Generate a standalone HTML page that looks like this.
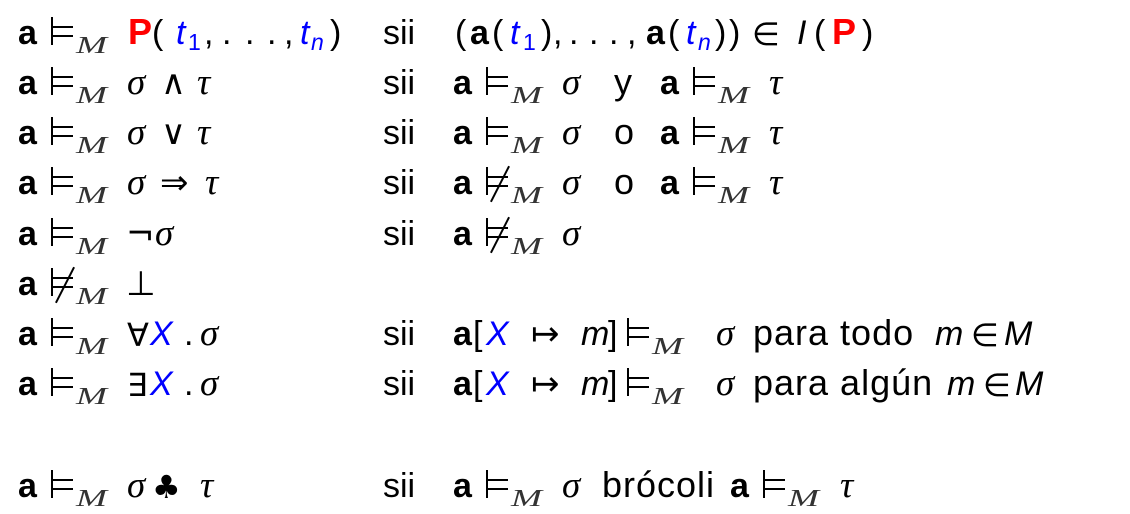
<!DOCTYPE html>
<html><head><meta charset="utf-8"><style>
body{margin:0;width:1130px;height:514px;background:#fff;position:relative;overflow:hidden;font-family:"Liberation Sans",sans-serif;color:#000}
.row{position:absolute;left:0;height:0;width:1130px}
.row span{position:absolute;line-height:1;white-space:nowrap;top:-0.85em}
.A{font-weight:bold;font-size:34px}
.S{font-size:34px}
.W{font-size:36px;letter-spacing:1px}
.R{font-family:"Liberation Serif",serif;font-style:italic;font-size:37px}
.I{font-style:italic;font-size:34px}
.D{font-family:"DejaVu Sans",sans-serif;font-size:30px}
.b{color:#0000ff}
.red{color:#ff0000;font-weight:bold;font-size:36px}
.row span.sub{font-family:"Liberation Serif",serif;font-style:italic;font-size:24px;color:#333;transform:scaleX(1.55);transform-origin:0 0;top:calc(-0.85em + 9px)}
.row span.s1{font-size:23px;top:calc(-0.85em + 6px)}
.row span.e{top:-28px;width:20px;height:28px;border-left:2px solid #000;background:linear-gradient(#000,#000) no-repeat 0 9px/100% 2px,linear-gradient(#000,#000) no-repeat 0 18px/100% 2px}
.row span.ne::after{content:"";position:absolute;left:11px;top:-3px;width:2px;height:40px;background:#000;transform:rotate(27deg)}
</style></head><body>

<div class="row" style="top:45px">
<span class="A" style="left:18px">a</span><span class="e" style="left:51px"></span><span class="sub" style="left:76px">M</span>
<span class="red" style="left:128px">P</span><span class="S" style="left:152px">(</span>
<span class="I b" style="left:176px">t</span><span class="S b s1" style="left:188px">1</span>
<span class="S" style="left:204px">,</span><span class="S" style="left:222px">.</span><span class="S" style="left:245px">.</span><span class="S" style="left:267px">.</span><span class="S" style="left:284px">,</span>
<span class="I b" style="left:300px">t</span><span class="I b s1" style="left:311px">n</span><span class="S" style="left:330px">)</span>
<span class="S" style="left:383px">sii</span>
<span class="S" style="left:455px">(</span><span class="A" style="left:470px">a</span><span class="S" style="left:492px">(</span>
<span class="I b" style="left:510px">t</span><span class="S b s1" style="left:523px">1</span><span class="S" style="left:541px">)</span>
<span class="S" style="left:553px">,</span><span class="S" style="left:569px">.</span><span class="S" style="left:589px">.</span><span class="S" style="left:609px">.</span><span class="S" style="left:627px">,</span>
<span class="A" style="left:646px">a</span><span class="S" style="left:668px">(</span><span class="I b" style="left:686px">t</span><span class="I b s1" style="left:698px">n</span>
<span class="S" style="left:715px">)</span><span class="S" style="left:729px">)</span>
<span class="D" style="left:752px;font-size:32px">∈</span><span class="I" style="left:797px">I</span><span class="S" style="left:814px">(</span>
<span class="red" style="left:832px">P</span><span class="S" style="left:862px">)</span>
</div>

<div class="row" style="top:95px">
<span class="A" style="left:18px">a</span><span class="e" style="left:51px"></span><span class="sub" style="left:76px">M</span>
<span class="R" style="left:127px">σ</span><span class="D" style="left:161px;font-size:34px">∧</span><span class="R" style="left:197px">τ</span>
<span class="S" style="left:383px">sii</span>
<span class="A" style="left:453px">a</span><span class="e" style="left:486px"></span><span class="sub" style="left:511px">M</span><span class="R" style="left:562px">σ</span>
<span class="W" style="left:614px">y</span>
<span class="A" style="left:660px">a</span><span class="e" style="left:693px"></span><span class="sub" style="left:718px">M</span><span class="R" style="left:769px">τ</span>
</div>

<div class="row" style="top:145px">
<span class="A" style="left:18px">a</span><span class="e" style="left:51px"></span><span class="sub" style="left:76px">M</span>
<span class="R" style="left:127px">σ</span><span class="D" style="left:161px;font-size:34px">∨</span><span class="R" style="left:197px">τ</span>
<span class="S" style="left:383px">sii</span>
<span class="A" style="left:453px">a</span><span class="e" style="left:486px"></span><span class="sub" style="left:511px">M</span><span class="R" style="left:562px">σ</span>
<span class="W" style="left:614px">o</span>
<span class="A" style="left:660px">a</span><span class="e" style="left:693px"></span><span class="sub" style="left:718px">M</span><span class="R" style="left:769px">τ</span>
</div>

<div class="row" style="top:195px">
<span class="A" style="left:18px">a</span><span class="e" style="left:51px"></span><span class="sub" style="left:76px">M</span>
<span class="R" style="left:127px">σ</span><span class="D" style="left:160px;font-size:34px">⇒</span><span class="R" style="left:205px">τ</span>
<span class="S" style="left:383px">sii</span>
<span class="A" style="left:453px">a</span><span class="e ne" style="left:486px"></span><span class="sub" style="left:511px">M</span><span class="R" style="left:562px">σ</span>
<span class="W" style="left:614px">o</span>
<span class="A" style="left:660px">a</span><span class="e" style="left:693px"></span><span class="sub" style="left:718px">M</span><span class="R" style="left:769px">τ</span>
</div>

<div class="row" style="top:246px">
<span class="A" style="left:18px">a</span><span class="e" style="left:51px"></span><span class="sub" style="left:76px">M</span>
<span class="D" style="left:126px;font-size:34px">¬</span><span class="R" style="left:155px">σ</span>
<span class="S" style="left:383px">sii</span>
<span class="A" style="left:453px">a</span><span class="e ne" style="left:486px"></span><span class="sub" style="left:511px">M</span><span class="R" style="left:562px">σ</span>
</div>

<div class="row" style="top:296px">
<span class="A" style="left:18px">a</span><span class="e ne" style="left:51px"></span><span class="sub" style="left:76px">M</span>
<span class="D" style="left:126px;font-size:34px">⊥</span>
</div>

<div class="row" style="top:346px">
<span class="A" style="left:18px">a</span><span class="e" style="left:51px"></span><span class="sub" style="left:76px">M</span>
<span class="D" style="left:127px;font-size:32px">∀</span><span class="I b" style="left:150px">X</span><span class="S" style="left:184px">.</span><span class="R" style="left:200px">σ</span>
<span class="S" style="left:383px">sii</span>
<span class="A" style="left:453px">a</span><span class="S" style="left:473px">[</span><span class="I b" style="left:486px">X</span>
<span class="D" style="left:531px;font-size:34px">↦</span><span class="I" style="left:581px">m</span><span class="S" style="left:608px">]</span>
<span class="e" style="left:627px"></span><span class="sub" style="left:652px">M</span><span class="R" style="left:716px">σ</span>
<span class="W" style="left:753px">para todo</span>
<span class="I" style="left:935px">m</span><span class="D" style="left:971px;font-size:32px">∈</span><span class="I" style="left:1004px">M</span>
</div>

<div class="row" style="top:396px">
<span class="A" style="left:18px">a</span><span class="e" style="left:51px"></span><span class="sub" style="left:76px">M</span>
<span class="D" style="left:127px;font-size:32px">∃</span><span class="I b" style="left:150px">X</span><span class="S" style="left:184px">.</span><span class="R" style="left:200px">σ</span>
<span class="S" style="left:383px">sii</span>
<span class="A" style="left:453px">a</span><span class="S" style="left:473px">[</span><span class="I b" style="left:486px">X</span>
<span class="D" style="left:531px;font-size:34px">↦</span><span class="I" style="left:581px">m</span><span class="S" style="left:608px">]</span>
<span class="e" style="left:627px"></span><span class="sub" style="left:652px">M</span><span class="R" style="left:716px">σ</span>
<span class="W" style="left:753px">para algún</span>
<span class="I" style="left:947px">m</span><span class="D" style="left:983px;font-size:32px">∈</span><span class="I" style="left:1015px">M</span>
</div>

<div class="row" style="top:498px">
<span class="A" style="left:18px">a</span><span class="e" style="left:51px"></span><span class="sub" style="left:76px">M</span>
<span class="R" style="left:127px">σ</span><span class="D" style="left:152px;font-size:32px">♣</span><span class="R" style="left:200px">τ</span>
<span class="S" style="left:383px">sii</span>
<span class="A" style="left:453px">a</span><span class="e" style="left:486px"></span><span class="sub" style="left:511px">M</span><span class="R" style="left:562px">σ</span>
<span class="W" style="left:602px">brócoli</span>
<span class="A" style="left:730px">a</span><span class="e" style="left:763px"></span><span class="sub" style="left:788px">M</span><span class="R" style="left:840px">τ</span>
</div>

</body></html>
